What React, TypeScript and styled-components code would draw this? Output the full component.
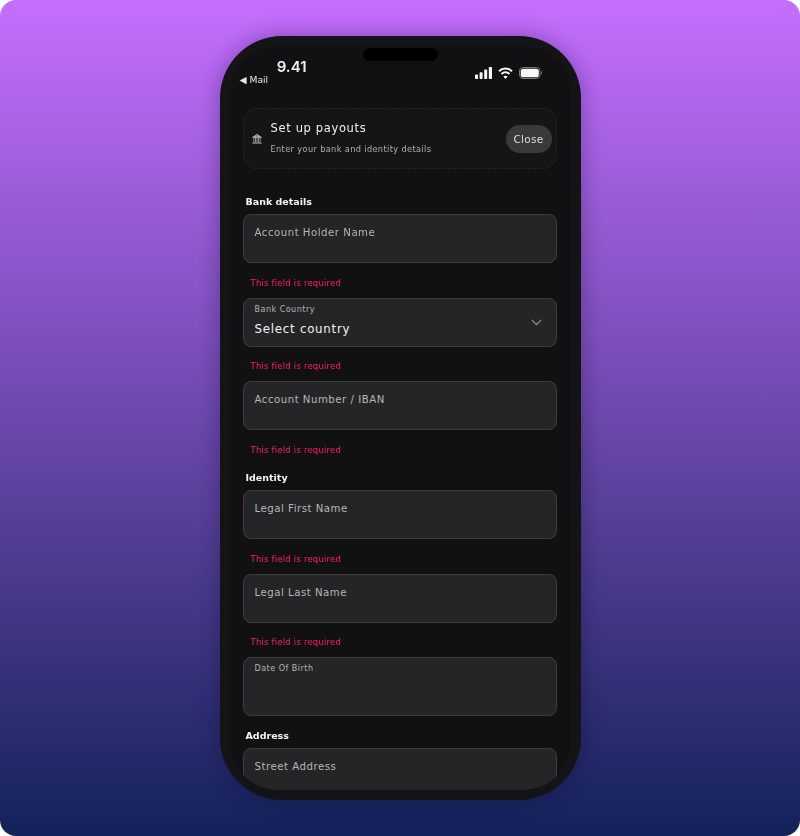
import React from 'react';
import styled, { createGlobalStyle } from 'styled-components';
import { BsBank2 } from 'react-icons/bs';
import { FiChevronDown } from 'react-icons/fi';

const GlobalStyle = createGlobalStyle`
  html, body {
    margin: 0;
    padding: 0;
    background: #fff;
  }
  * {
    box-sizing: border-box;
  }
`;

// Gradient canvas with rounded corners
const Page = styled.div`
  width: 800px;
  height: 836px;
  padding-top: 36px;
  display: flex;
  justify-content: center;
  align-items: flex-start;
  border-radius: 16px;
  overflow: hidden;
  background: linear-gradient(180deg, #c56eff 0%, #13225a 100%);
  font-family: "DejaVu Sans", sans-serif;
`;

const Phone = styled.div`
  position: relative;
  width: 361px;
  height: 764px;
  flex-shrink: 0;
  padding: 10px;
  border-radius: 62px;
  background: #141416;
  box-shadow: 0 0 22px rgba(10, 5, 30, 0.32);
`;

const Island = styled.div`
  position: absolute;
  z-index: 2;
  top: 12px;
  left: 143px;
  width: 75px;
  height: 13px;
  border-radius: 7px;
  background: #000;
`;

const Screen = styled.div`
  height: 744px;
  border-radius: 48px;
  overflow: hidden;
  background: #111113;
  filter: blur(0.3px);
`;

const StatusBar = styled.div`
  height: 62px;
  padding: 12px 29px 0 10px;
  display: flex;
  justify-content: space-between;
  align-items: flex-start;
`;

const StatusLeft = styled.div`
  width: 67px;
  display: flex;
  flex-direction: column;
  align-items: flex-end;
`;

const Time = styled.div`
  color: #f2f2f2;
  font-family: Inter, sans-serif;
  font-size: 15px;
  font-weight: 600;
  line-height: 17px;
`;

const BackLink = styled.div`
  align-self: flex-start;
  margin-top: -2px;
  color: #e8e8e8;
  font-size: 9.2px;
  line-height: 13px;
`;

const StatusIcons = styled.div`
  display: flex;
  align-items: center;
  gap: 6px;
  margin-top: 9px;
`;

const Content = styled.div`
  padding: 0 14px 0 13px;
`;

const Banner = styled.div`
  height: 61px;
  padding: 0 4px 0 8px;
  display: flex;
  align-items: center;
  border: 1px dashed #26262a;
  border-radius: 14px;
  background: #151517;
`;

const BannerIcon = styled.div`
  width: 19px;
  display: flex;
  color: #b4b4b4;
  font-size: 10px;
`;

const BannerText = styled.div`
  flex: 1;
  display: flex;
  flex-direction: column;
  gap: 9px;
  margin-top: -1px;
`;

const BannerTitle = styled.div`
  color: #f0f0f0;
  font-size: 11.5px;
  line-height: 14px;
  letter-spacing: 0.65px;
`;

const BannerSub = styled.div`
  color: #b0b0b0;
  font-size: 8.2px;
  line-height: 11px;
  letter-spacing: 0.37px;
`;

const CloseButton = styled.button`
  width: 46px;
  height: 28px;
  padding: 0;
  border: 0;
  border-radius: 14px;
  background: #3a3a3c;
  color: #dcdcdc;
  font-family: inherit;
  font-size: 10.5px;
  letter-spacing: 0.3px;
`;

const SectionTitle = styled.div<{ $top: number }>`
  margin: ${p => p.$top}px 0 6px 3px;
  color: #f4f4f4;
  font-size: 9.5px;
  font-weight: 700;
  line-height: 12px;
`;

const Field = styled.div<{ $height?: number }>`
  position: relative;
  height: ${p => p.$height ?? 49}px;
  padding: 11px 11px 0;
  border: 1px solid #3d3d41;
  border-radius: 8px;
  background: #252528;
`;

const Placeholder = styled.div`
  color: #b6b6b6;
  font-size: 10.2px;
  line-height: 13px;
  letter-spacing: 0.5px;
`;

const SmallLabel = styled.div`
  color: #b4b4b4;
  font-size: 8px;
  line-height: 10px;
  letter-spacing: 0.5px;
`;

const SelectField = styled(Field)`
  padding-top: 6px;
`;

const DateField = styled(Field)`
  padding-top: 6px;
`;

const SelectValue = styled.div`
  margin-top: 7px;
  color: #f2f2f2;
  font-size: 11.8px;
  line-height: 15px;
  letter-spacing: 0.75px;
`;

const Chevron = styled.div`
  position: absolute;
  top: 15px;
  right: 11px;
  display: flex;
  color: #77777a;
  font-size: 17px;
`;

const ErrorText = styled.div`
  height: 34.7px;
  padding: 14.6px 0 0 8px;
  color: #ff1c6c;
  font-size: 8.5px;
  line-height: 11px;
  letter-spacing: 0.2px;
`;

const Cellular = () => (
  <svg width="17" height="12" viewBox="0 0 17 12" fill="#f8f8f8">
    <rect x="0" y="7.5" width="3" height="4.5" rx="0.8" />
    <rect x="4.6" y="5.2" width="3" height="6.8" rx="0.8" />
    <rect x="9.2" y="2.6" width="3" height="9.4" rx="0.8" />
    <rect x="13.8" y="0" width="3.2" height="12" rx="0.8" />
  </svg>
);

const Wifi = () => (
  <svg width="15" height="12" viewBox="0 0 15 12" fill="none" stroke="#f8f8f8" strokeWidth="2">
    <path d="M1 4.2C4.6 .6 10.4 .6 14 4.2" />
    <path d="M3.5 7C5.7 4.8 9.3 4.8 11.5 7" />
    <path d="M7.5 12 5.4 9.4C6.6 8.4 8.4 8.4 9.6 9.4Z" fill="#f8f8f8" stroke="none" />
  </svg>
);

const Battery = () => (
  <svg width="23" height="12" viewBox="0 0 23 12">
    <rect x="0.5" y="0.5" width="20.5" height="11" rx="3.5" fill="none" stroke="#77777a" />
    <rect x="1.7" y="1.7" width="18.1" height="8.6" rx="2.6" fill="#fafafa" />
    <path d="M22 4.2c.7.3 1 1 1 1.8s-.3 1.5-1 1.8Z" fill="#77777a" />
  </svg>
);

const App: React.FC = () => {
  return (
    <>
      <GlobalStyle />
      <Page>
        <Phone>
          <Island />
          <Screen>
            <StatusBar>
              <StatusLeft>
                <Time>9.41</Time>
                <BackLink>◀ Mail</BackLink>
              </StatusLeft>
              <StatusIcons>
                <Cellular />
                <Wifi />
                <Battery />
              </StatusIcons>
            </StatusBar>
            <Content>
              <Banner>
                <BannerIcon>
                  <BsBank2 />
                </BannerIcon>
                <BannerText>
                  <BannerTitle>Set up payouts</BannerTitle>
                  <BannerSub>Enter your bank and identity details</BannerSub>
                </BannerText>
                <CloseButton>Close</CloseButton>
              </Banner>

              <SectionTitle $top={27}>Bank details</SectionTitle>
              <Field>
                <Placeholder>Account Holder Name</Placeholder>
              </Field>
              <ErrorText>This field is required</ErrorText>
              <SelectField>
                <SmallLabel>Bank Country</SmallLabel>
                <SelectValue>Select country</SelectValue>
                <Chevron>
                  <FiChevronDown />
                </Chevron>
              </SelectField>
              <ErrorText>This field is required</ErrorText>
              <Field>
                <Placeholder>Account Number / IBAN</Placeholder>
              </Field>
              <ErrorText>This field is required</ErrorText>

              <SectionTitle $top={7}>Identity</SectionTitle>
              <Field>
                <Placeholder>Legal First Name</Placeholder>
              </Field>
              <ErrorText>This field is required</ErrorText>
              <Field>
                <Placeholder>Legal Last Name</Placeholder>
              </Field>
              <ErrorText>This field is required</ErrorText>
              <DateField $height={59}>
                <SmallLabel>Date Of Birth</SmallLabel>
              </DateField>

              <SectionTitle $top={14}>Address</SectionTitle>
              <Field>
                <Placeholder>Street Address</Placeholder>
              </Field>
            </Content>
          </Screen>
        </Phone>
      </Page>
    </>
  );
};

export default App;
